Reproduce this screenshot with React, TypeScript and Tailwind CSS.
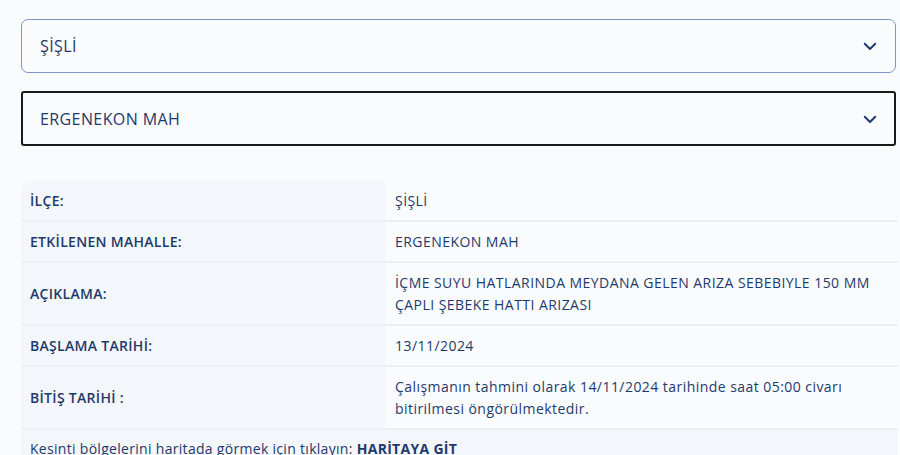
import React from "react";

const Chevron = () => (
  <svg width="18" height="18" viewBox="0 0 24 24" fill="none" stroke="#1d3b70" strokeWidth="2.6" strokeLinecap="round" strokeLinejoin="round">
    <path d="M5 9l7 7 7-7" />
  </svg>
);

const rows: { label: string; value: React.ReactNode; tall?: boolean }[] = [
  { label: "İLÇE:", value: "ŞİŞLİ" },
  { label: "ETKİLENEN MAHALLE:", value: "ERGENEKON MAH" },
  {
    label: "AÇIKLAMA:",
    value: "İÇME SUYU HATLARINDA MEYDANA GELEN ARIZA SEBEBIYLE 150 MM ÇAPLI ŞEBEKE HATTI ARIZASI",
    tall: true,
  },
  { label: "BAŞLAMA TARİHİ:", value: "13/11/2024" },
  {
    label: "BİTİŞ TARİHİ :",
    value: "Çalışmanın tahmini olarak 14/11/2024 tarihinde saat 05:00 civarı bitirilmesi öngörülmektedir.",
    tall: true,
  },
];

export default function App() {
  return (
    <div
      className="w-[900px] h-[455px] overflow-hidden bg-[#fafbfd] text-[#1e3a6b]"
      style={{ fontFamily: "'Open Sans', Lato, sans-serif" }}
    >
      <div className="pl-[21px] pr-[4px] pt-[19px]">
        <div className="h-[54px] rounded-[7px] border border-[#7d96c2] flex items-center justify-between pl-[18px] pr-[16px]">
          <span className="text-[16px] tracking-[0.4px]">ŞİŞLİ</span>
          <Chevron />
        </div>
        <div className="mt-[18px] h-[55px] rounded-[3px] border-2 border-[#1a1a1a] flex items-center justify-between pl-[17px] pr-[15px]">
          <span className="text-[16px] tracking-[0.4px]">ERGENEKON MAH</span>
          <Chevron />
        </div>

        <div className="mt-[35px] w-[876px] rounded-tl-[10px] overflow-hidden">
          {rows.map((r, i) => (
            <div
              key={i}
              className={`flex border-b-2 border-[#eceef2] ${r.tall ? "h-[63px]" : "h-[41px]"}`}
            >
              <div className="w-[364px] bg-[#f3f6fa] flex items-center pl-[9px] text-[14px] tracking-[0.3px] font-semibold">
                {r.label}
              </div>
              <div className="flex-1 flex items-center pl-[10px] pr-[16px] text-[14px] tracking-[0.45px] leading-[22px]">
                <span>{r.value}</span>
              </div>
            </div>
          ))}
          <div className="bg-[#f3f6fa] h-[40px] pl-[9px] pt-[8px] text-[14px] tracking-[0.3px]">
            Kesinti bölgelerini haritada görmek için tıklayın: <span className="font-bold">HARİTAYA GİT</span>
          </div>
        </div>
      </div>
    </div>
  );
}
